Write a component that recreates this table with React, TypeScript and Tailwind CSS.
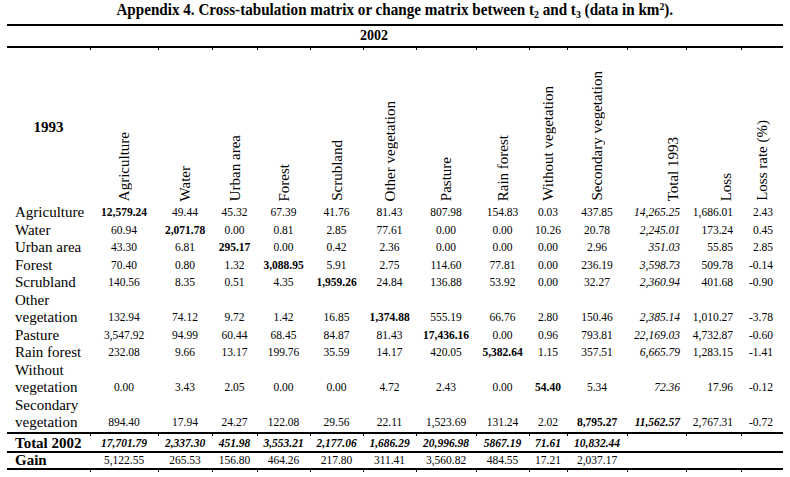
const COLS = 'grid-cols-[83px_68px_54px_45px_53px_53px_53px_60px_53px_38px_60px_59px_55px_42px]'

const classes = [
	'Agriculture',
	'Water',
	'Urban area',
	'Forest',
	'Scrubland',
	'Other vegetation',
	'Pasture',
	'Rain forest',
	'Without vegetation',
	'Secondary vegetation',
]

// [row label lines, matrix values, total 1993, loss, loss rate]
const rows: [string[], string[], string, string, string][] = [
	[['Agriculture'], ['12,579.24', '49.44', '45.32', '67.39', '41.76', '81.43', '807.98', '154.83', '0.03', '437.85'], '14,265.25', '1,686.01', '2.43'],
	[['Water'], ['60.94', '2,071.78', '0.00', '0.81', '2.85', '77.61', '0.00', '0.00', '10.26', '20.78'], '2,245.01', '173.24', '0.45'],
	[['Urban area'], ['43.30', '6.81', '295.17', '0.00', '0.42', '2.36', '0.00', '0.00', '0.00', '2.96'], '351.03', '55.85', '2.85'],
	[['Forest'], ['70.40', '0.80', '1.32', '3,088.95', '5.91', '2.75', '114.60', '77.81', '0.00', '236.19'], '3,598.73', '509.78', '-0.14'],
	[['Scrubland'], ['140.56', '8.35', '0.51', '4.35', '1,959.26', '24.84', '136.88', '53.92', '0.00', '32.27'], '2,360.94', '401.68', '-0.90'],
	[['Other', 'vegetation'], ['132.94', '74.12', '9.72', '1.42', '16.85', '1,374.88', '555.19', '66.76', '2.80', '150.46'], '2,385.14', '1,010.27', '-3.78'],
	[['Pasture'], ['3,547.92', '94.99', '60.44', '68.45', '84.87', '81.43', '17,436.16', '0.00', '0.96', '793.81'], '22,169.03', '4,732.87', '-0.60'],
	[['Rain forest'], ['232.08', '9.66', '13.17', '199.76', '35.59', '14.17', '420.05', '5,382.64', '1.15', '357.51'], '6,665.79', '1,283.15', '-1.41'],
	[['Without', 'vegetation'], ['0.00', '3.43', '2.05', '0.00', '0.00', '4.72', '2.43', '0.00', '54.40', '5.34'], '72.36', '17.96', '-0.12'],
	[['Secondary', 'vegetation'], ['894.40', '17.94', '24.27', '122.08', '29.56', '22.11', '1,523.69', '131.24', '2.02', '8,795.27'], '11,562.57', '2,767.31', '-0.72'],
]

const total2002 = ['17,701.79', '2,337.30', '451.98', '3,553.21', '2,177.06', '1,686.29', '20,996.98', '5867.19', '71.61', '10,832.44']
const gain = ['5,122.55', '265.53', '156.80', '464.26', '217.80', '311.41', '3,560.82', '484.55', '17.21', '2,037.17']

// horizontal rule with little ticks at the column boundaries
function Rule({ ticks = true }: { ticks?: boolean }) {
	return (
		<div className={`grid ${COLS} border-t-2 border-black`}>
			{Array.from({ length: 14 }).map((_, i) => (
				<div key={i} className={ticks ? 'h-[2px]' : 'h-0'}>
					{ticks && i > 0 && <div className="w-px h-full bg-black" />}
				</div>
			))}
		</div>
	)
}

function VLabel({ children }: { children: string }) {
	return (
		<span className="[writing-mode:vertical-rl] rotate-180 whitespace-nowrap leading-[14px]">
			{children}
		</span>
	)
}

export default function App() {
	return (
		<div className="w-[790px] h-[477px] bg-white text-black font-['Liberation_Serif','Times_New_Roman',serif]">
			{/* title */}
			<div className="h-[24px] flex justify-center">
				<div className="scale-x-[0.89] whitespace-nowrap text-[17px] leading-[20px] font-bold">
					Appendix 4. Cross-tabulation matrix or change matrix between t<sub className="text-[11px]">2</sub> and t<sub className="text-[11px]">3</sub> (data in km<sup className="text-[11px]">2</sup>).
				</div>
			</div>

			<div className="ml-[7px] w-[776px]">
				<Rule ticks={false} />
				<div className={`grid ${COLS} h-[20px] items-center`}>
					<div className="col-span-13 text-center text-[14px] font-bold leading-[20px]">2002</div>
				</div>
				<Rule />

				{/* rotated header */}
				<div className={`grid ${COLS} h-[154px] text-[15px]`}>
					<div className="pt-[66px] text-center font-bold">1993</div>
					{classes.map((c) => (
						<div key={c} className="flex items-end justify-center pb-[3px]">
							<VLabel>{c}</VLabel>
						</div>
					))}
					<div className="flex items-end justify-end pr-[6px] pb-[3px]">
						<VLabel>Total 1993</VLabel>
					</div>
					<div className="flex items-end justify-end pr-[8px] pb-[3px]">
						<VLabel>Loss</VLabel>
					</div>
					<div className="flex items-end justify-center pb-[3px]">
						<VLabel>Loss rate (%)</VLabel>
					</div>
				</div>

				{/* body */}
				{rows.map(([label, vals, total, loss, rate], r) => (
					<div key={r} className={`grid ${COLS} items-end leading-[17.5px]`}>
						<div className="pl-[8px] text-[15px] whitespace-nowrap">
							{label.map((l) => (
								<div key={l}>{l}</div>
							))}
						</div>
						{vals.map((v, c) => (
							<div key={c} className={`text-center text-[11.5px] ${c === r ? 'font-bold' : ''}`}>
								{v}
							</div>
						))}
						<div className={`text-right pr-[6px] text-[11.5px] italic ${r === 9 ? 'font-bold' : ''}`}>{total}</div>
						<div className="text-right pr-[8px] text-[11.5px]">{loss}</div>
						<div className="text-right pr-[10px] text-[11.5px]">{rate}</div>
					</div>
				))}

				<Rule />
				<div className={`grid ${COLS} h-[15px] items-center leading-[15px]`}>
					<div className="pl-[8px] text-[15px] font-bold whitespace-nowrap">Total 2002</div>
					{total2002.map((v, c) => (
						<div key={c} className="text-center text-[11.5px] font-bold italic">{v}</div>
					))}
				</div>
				<Rule ticks={false} />
				<div className={`grid ${COLS} h-[15px] items-center leading-[15px]`}>
					<div className="pl-[8px] text-[15px] font-bold">Gain</div>
					{gain.map((v, c) => (
						<div key={c} className="text-center text-[11.5px]">{v}</div>
					))}
				</div>
				<Rule />
			</div>
		</div>
	)
}
